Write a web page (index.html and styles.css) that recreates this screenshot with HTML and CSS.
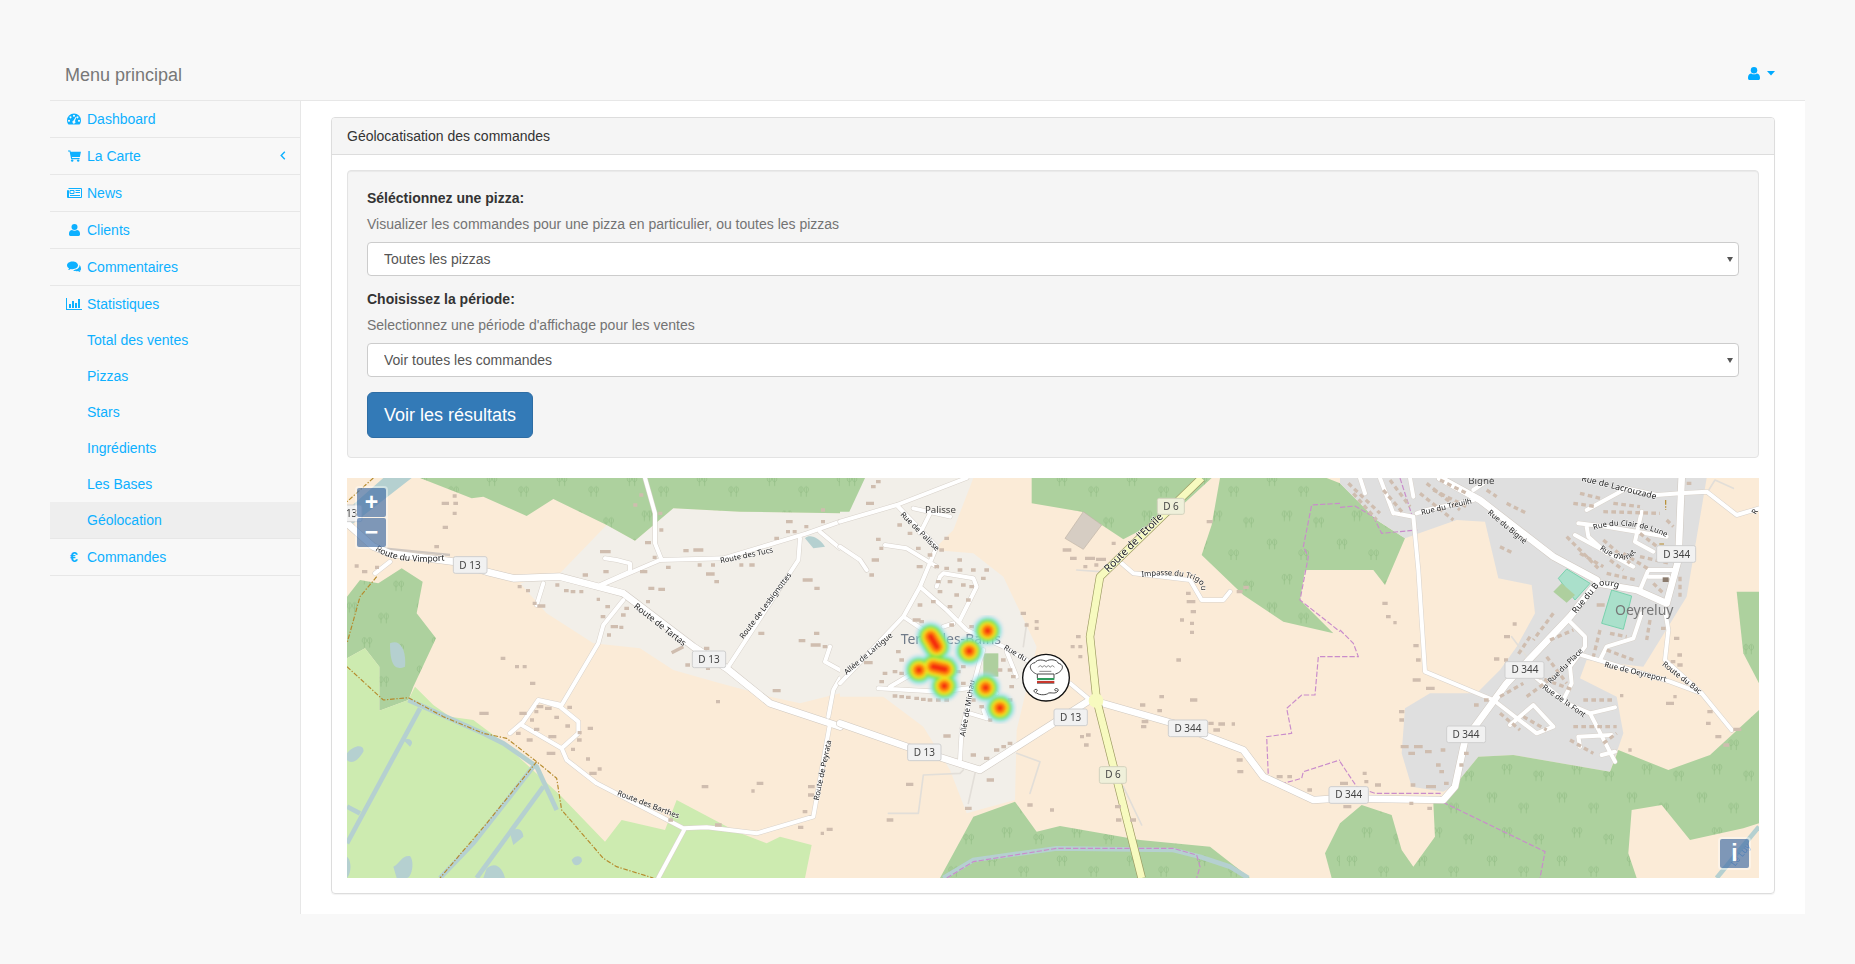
FILE: index.html
```html
<!DOCTYPE html>
<html lang="fr">
<head>
    <meta charset="UTF-8">
    <meta name="viewport" content="width=device-width, initial-scale=1.0">
    <title>Géolocalisation des commandes</title>
    <link rel="stylesheet" href="styles.css">
</head>
<body>
<nav class="topbar">
    <span class="brand">Menu principal</span>
    <a class="user-menu" href="#">
        <svg class="ico" width="12" height="13" viewBox="0 0 11 12"><circle cx="5.5" cy="3" r="3"/><path d="M0 10.6V9.5C0 7.5 1.5 6 3 6c.7.5 1.5.8 2.5.8S7.3 6.5 8 6c1.5 0 3 1.5 3 3.5v1.1c0 .8-.6 1.4-1.4 1.4H1.4C.6 12 0 11.4 0 10.6z"/></svg>
        <svg class="ico caret" width="8" height="5" viewBox="0 0 8 5"><path d="M0 0h8L4 4.6z"/></svg>
    </a>
</nav>

<div class="layout">
    <aside class="sidebar">
        <ul class="side-menu">
            <li><a href="#"><span class="icon-box"><svg class="ico" width="14" height="12" viewBox="0 0 14 12"><path fill-rule="evenodd" d="M7 .5A7 7 0 0 0 0 7.5c0 1.3.35 2.5 1 3.5.15.25.4.5.7.5h10.6c.3 0 .55-.25.7-.5.65-1 1-2.2 1-3.5A7 7 0 0 0 7 .5zM7 1.7a1 1 0 1 0 .01 0zM3.5 3.2a1 1 0 1 0 .01 0zM10.5 3.2a1 1 0 1 0 .01 0zM2 6.7a1 1 0 1 0 .01 0zM12 6.7a1 1 0 1 0 .01 0zM8.6 3.9L6.6 7.6a1.5 1.5 0 1 0 1.3.3l1.5-3.7z"/></svg></span>Dashboard</a></li>
            <li><a href="#"><span class="icon-box"><svg class="ico" width="13" height="12" viewBox="0 0 14 13"><path d="M0 .5h2.5l.4 1.5H14l-1.2 5.5H4.2l.3 1.2h8v1.2H3.4L1.7 1.7H0z"/><circle cx="4.5" cy="11.5" r="1.3"/><circle cx="11" cy="11.5" r="1.3"/></svg></span>La Carte<svg class="chevron" width="6" height="9" viewBox="0 0 6 9"><path d="M4.8.8L1.2 4.5l3.6 3.7"/></svg></a></li>
            <li><a href="#"><span class="icon-box"><svg class="ico line" width="16" height="12" viewBox="0 0 16 12"><path d="M2.5 1.5h13v9h-14v-7h1v6.5M4 3.5h4v3H4zM9.5 3.5h4.5M9.5 5.5h4.5M4 8.5h10"/></svg></span>News</a></li>
            <li><a href="#"><span class="icon-box"><svg class="ico" width="11" height="12" viewBox="0 0 11 12"><circle cx="5.5" cy="3" r="3"/><path d="M0 10.6V9.5C0 7.5 1.5 6 3 6c.7.5 1.5.8 2.5.8S7.3 6.5 8 6c1.5 0 3 1.5 3 3.5v1.1c0 .8-.6 1.4-1.4 1.4H1.4C.6 12 0 11.4 0 10.6z"/></svg></span>Clients</a></li>
            <li><a href="#"><span class="icon-box"><svg class="ico" width="14" height="12" viewBox="0 0 14 12"><path d="M5.5.5C2.5.5 0 2.2 0 4.3c0 1.2.8 2.3 2 3-.1.6-.5 1.2-1 1.7 1 0 2-.4 2.8-1 .5.1 1.1.2 1.7.2 3 0 5.5-1.7 5.5-3.9S8.5.5 5.5.5z"/><path d="M12.3 3.8c.1.2.2.5.2.8 0 2.6-2.8 4.4-6.5 4.5.9.8 2.2 1.2 3.6 1.2.5 0 1 0 1.4-.2.7.5 1.5.9 2.4.9-.4-.4-.7-.9-.8-1.4C13.4 10 14 9 14 8c0-1.8-.7-3.2-1.7-4.2z"/></svg></span>Commentaires</a></li>
            <li class="has-sub">
                <a href="#"><span class="icon-box"><svg class="ico" width="16" height="12" viewBox="0 0 16 12"><path d="M0 0h1v11h15v1H0z"/><path d="M3 6h2v4H3zM6 3h2v7H6zM9 5h2v5H9zM12 1h2v9h-2z"/></svg></span>Statistiques</a>
                <ul class="sub-menu">
                    <li><a href="#">Total des ventes</a></li>
                    <li><a href="#">Pizzas</a></li>
                    <li><a href="#">Stars</a></li>
                    <li><a href="#">Ingrédients</a></li>
                    <li><a href="#">Les Bases</a></li>
                    <li class="active"><a href="#">Géolocation</a></li>
                </ul>
            </li>
            <li><a href="#"><span class="icon-box euro">€</span>Commandes</a></li>
        </ul>
    </aside>

    <main class="page">
        <section class="panel">
            <div class="panel-heading">Géolocatisation des commandes</div>
            <div class="panel-body">
                <form class="well">
                    <label for="pizza">Séléctionnez une pizza:</label>
                    <p class="help">Visualizer les commandes pour une pizza en particulier, ou toutes les pizzas</p>
                    <div class="select-wrap">
                        <select id="pizza" class="form-control">
                            <option>Toutes les pizzas</option>
                        </select>
                    </div>
                    <label for="periode">Choisissez la période:</label>
                    <p class="help">Selectionnez une période d'affichage pour les ventes</p>
                    <div class="select-wrap">
                        <select id="periode" class="form-control">
                            <option>Voir toutes les commandes</option>
                        </select>
                    </div>
                    <button type="button" class="btn">Voir les résultats</button>
                </form>

                <div class="map">
                    <svg class="map-canvas" width="1412" height="400" viewBox="0 0 4236 1200">
                        <defs>
                            <pattern id="trees" width="210" height="190" patternUnits="userSpaceOnUse">
                                <rect width="210" height="190" fill="#add19e"/>
                                <g fill="none" stroke="#93bd85" stroke-width="2.2">
                                    <path id="tree" d="M28 48V20M44 48V20M28 18c-8 0-9 17 0 17s8-17 0-17zM44 18c-8 0-9 17 0 17s8-17 0-17z"/>
                                    <use href="#tree" x="95" y="32"/>
                                    <use href="#tree" x="45" y="105"/>
                                    <use href="#tree" x="140" y="125"/>
                                </g>
                            </pattern>
                            <path id="p-vimport" d="M105 240Q170 288 330 270"/>
                            <path id="p-impasse" d="M905 320Q1000 310 1050 325T1075 375"/>
                            <path id="p-clair" d="M762 180Q860 145 988 205"/>
                            <path id="p-arriet" d="M778 238Q840 280 868 265T892 218"/>
                            <path id="p-bourg" d="M708 432L775 350Q800 340 845 358"/>
                            <path id="heat" d="M443 482h0M388 543h0M272 500L290 530M237 600h0M280 590L315 598M313 648h0M437 653h0M480 714h0"/>
                            <filter id="soft" x="-20%" y="-20%" width="140%" height="140%"><feGaussianBlur stdDeviation="4"/></filter>
                        </defs>

                        <rect width="4236" height="1200" fill="#fbebd7"/>

                        <!-- left part of the map -->
                        <g transform="translate(-21,-24)">
                            <path class="town" d="M540 340L660 310 800 165 885 212 1000 115 1200 125 1500 130V670L1380 700 1290 680 1140 640 1000 600 900 535 760 520 620 430z"/>
                            <path class="wood" d="M240 24L395 85 430 80 560 138 640 87 800 165 885 212 1000 115 1200 125 1500 130V24z"/>
                            <path class="wood" d="M21 380L60 330 115 340 185 295 248 335 230 430 288 505 220 650 205 690 118 722V590L75 535 21 565z"/>
                            <path class="meadow" d="M21 565L75 535 118 590V722L205 690 225 650 280 705 330 740 400 750 480 810 660 975 795 1115 845 1050 975 1080 1010 990 1190 1085 1280 1120 1320 1100 1415 1125 1395 1224H21z"/>
                            <path class="water-line" d="M205 690L430 790 490 820 590 890 650 1020M240 715L21 1120M580 890L400 1120 300 1224M610 950L410 1224M21 1010L60 1030"/>
                            <path class="water" d="M130 24H215L21 175V120zM150 520C180 505 200 540 195 590 170 600 150 595 150 520zM21 850C45 820 75 825 70 845 50 880 30 880 21 870zM190 810C210 800 225 815 210 830zM695 1170C710 1150 730 1160 725 1175 715 1190 700 1190 695 1170zM160 1190C180 1180 185 1155 210 1158 225 1175 215 1224 200 1224H170zM510 1090C530 1065 550 1080 550 1100L520 1125zM440 1195C470 1170 490 1200 495 1224H430zM1395 205C1410 190 1440 205 1455 230L1420 235zM21 1160C35 1170 35 1210 21 1224z"/>
                            <path class="casing" d="M100 232L330 255M100 232L150 250 340 276"/>
                            <path class="road-case" d="M915 24L945 130V220L965 270M785 345L960 270 1150 265 1400 190 1500 155M780 345L870 305V280L830 270 795 265M610 340L590 405M850 390L790 465 775 520 665 705 595 690 550 755 510 790M595 690L660 710 715 755V790L665 835 545 765M665 835L680 870 770 940 1030 1075 1100 1072 1250 1090 1420 1040 1470 760M1035 1075L955 1224M1380 205L1375 270 1165 590M1470 530L1455 575 1500 600M1500 625L1480 660 1465 740M1440 185L1500 235M150 275L105 310"/>
                            <path class="major-case" d="M21 160L100 230 150 250 340 275 440 305 520 325 660 320 850 370 1060 530 1160 595 1290 700 1500 770"/>
                            <path class="road" d="M915 24L945 130V220L965 270M785 345L960 270 1150 265 1400 190 1500 155M780 345L870 305V280L830 270 795 265M610 340L590 405M850 390L790 465 775 520 665 705 595 690 550 755 510 790M595 690L660 710 715 755V790L665 835 545 765M665 835L680 870 770 940 1030 1075 1100 1072 1250 1090 1420 1040 1470 760M1035 1075L955 1224M1380 205L1375 270 1165 590M1470 530L1455 575 1500 600M1500 625L1480 660 1465 740M1440 185L1500 235M150 275L105 310"/>
                            <path class="major" d="M21 160L100 230 150 250 340 275 440 305 520 325 660 320 850 370 1060 530 1160 595 1290 700 1500 770"/>
                            <path class="border-brown" d="M21 590L130 690 205 683 310 740 430 790 500 805 590 875 650 925 665 1020 790 1165 830 1190 940 1224M590 875L440 1060 300 1224M100 24L21 95M110 320L60 380 21 520"/>
                            <path class="bldg" d="M482 565h14M525 590h12M548 590h12M570 640h16M418 730h28M340 100h14M305 100h22M338 130h12M308 172h16M283 230h14M44 288h12M66 305h16M105 292h12M338 78h12M780 245h32M790 305h16M898 75h12M880 105h12M955 130h12M958 180h12M915 218h18M938 262h12M1030 242h16M1060 240h30M978 292h14M900 305h22M1073 285h12M1113 285h12M1198 285h12M1228 285h16M1303 205h14M1338 155h20M1338 185h12M1358 185h12M1393 170h12M1443 120h12M1443 155h12M1098 312h26M1123 335h14M1388 330h30M1423 355h16M1376 512h20M1412 525h30M1422 490h16M1448 530h14M1255 490h18M1092 535h16M1128 695h12M1298 662h24M925 355h18M955 358h20M918 395h12M853 415h14M843 435h14M796 410h14M770 388h10M782 440h14M812 470h22M838 472h12M801 495h12M728 315h16M646 345h12M692 365h14M718 365h12M672 362h14M533 350h12M558 362h12M592 408h24M578 400h12M995 548L1030 530M1036 585h14M1098 595h12M590 710h20M615 715h20M682 712h14M643 742h14M676 768h14M583 725h12M538 730h22M570 750h12M582 778h16M625 800h24M743 775h16M713 788h12M711 810h14M693 838h12M738 867h12M773 897h12M748 910h22M620 850h26M560 810h18M528 790h14M1085 950h20M1250 940h20M1234 963h10M1388 1025h14M1374 1072h16M1404 950h20M1404 975h18M1460 1078h18M1442 1090h10M1125 1065h20M985 1050h14"/>
                            <text class="lbl wide"><textPath href="#p-vimport">Route du Vimport</textPath></text>
                            <text class="lbl" transform="translate(1142,280) rotate(-12)">Route des Tucs</text>
                            <text class="lbl" transform="translate(1210,508) rotate(-53)">Route de Lesbignottes</text>
                            <text class="lbl wide" transform="translate(880,412) rotate(38)">Route de Tartas</text>
                            <text class="lbl" transform="translate(830,975) rotate(21)">Route des Barthes</text>
                            <text class="lbl" transform="translate(1436,992) rotate(-78)">Route de Peyrata</text>
                            <g class="shield"><rect x="-40" y="105" width="106" height="50" rx="6"/><text x="20" y="140">D 13</text></g>
                            <g class="shield"><rect x="340" y="260" width="101" height="50" rx="6"/><text x="390" y="296">D 13</text></g>
                            <g class="shield"><rect x="1057" y="543" width="100" height="50" rx="6"/><text x="1107" y="579">D 13</text></g>
                        </g>

                        <!-- middle part of the map -->
                        <g transform="translate(1479,-24)">
                            <path class="town" d="M0 125L75 24H400L340 180 280 240 400 250 490 320 590 530 530 780 525 990 380 1030 330 900 250 770 130 680H0z"/>
                            <path class="wood" d="M0 24H75L28 125H0z"/>
                            <path class="wood" d="M575 24V100L725 125 850 208 1000 130 1115 24z"/>
                            <path class="wood" d="M1140 24L1115 165 1085 255 1210 375 1330 455 1480 490 1380 390 1395 300H1600L1635 345 1695 205 1610 150 1550 90 1500 40 1460 24z"/>
                            <path class="wood" d="M300 1224L400 1040 525 995 590 1085 660 1068 900 1110 1110 1130 1230 1224z"/>
                            <path class="wood" d="M1500 1060L1455 1150 1475 1224H1500z"/>
                            <path class="hall" d="M675 205L730 125 785 165 730 238z"/>
                            <path class="park" d="M430 550H475V620H430z"/>
                            <path class="river" d="M310 1224L400 1170 650 1135 1000 1140 1080 1160 1170 1190 1225 1224"/>
                            <path class="border-pink" d="M320 1224L400 1175 650 1135 1000 1135 1070 1155 1080 1190 1070 1224M1500 560H1435L1425 675H1385L1340 715 1355 790 1280 800 1285 920 1330 940 1385 925 1390 905 1500 870M1500 100L1415 105 1390 230 1405 260 1380 390 1500 485"/>
                            <path class="thin" d="M145 1030H235L250 915 360 910 370 900M530 850L600 875 570 970M560 460L550 530M850 950L905 1065M385 1000L405 910M710 300L780 305"/>
                            <path class="road-case" d="M0 155L170 105 380 24M170 105L290 230 240 350 190 440 0 640M220 115L330 140M270 130L240 190M135 225L200 235 290 290M0 230L60 270 80 300M240 350L320 420 380 480 490 530 560 570M690 640L750 690M300 320L310 310 400 325 410 350 360 450M300 320L290 350M190 440L250 480M310 470L340 460M115 655L300 665 420 650M150 650L210 615M360 870L365 780 420 570 430 540M390 730L440 745 430 720M470 670L440 650M500 545L510 570 530 620M845 280L880 310 1050 330 1085 390H1150L1170 365"/>
                            <path class="major-case" d="M0 760L200 830 420 900 640 760 750 690M790 700L1000 760 1210 840 1270 920 1420 990 1500 985"/>
                            <path class="road" d="M0 155L170 105 380 24M170 105L290 230 240 350 190 440 0 640M220 115L330 140M270 130L240 190M135 225L200 235 290 290M0 230L60 270 80 300M240 350L320 420 380 480 490 530 560 570M690 640L750 690M300 320L310 310 400 325 410 350 360 450M300 320L290 350M190 440L250 480M310 470L340 460M115 655L300 665 420 650M150 650L210 615M360 870L365 780 420 570 430 540M390 730L440 745 430 720M470 670L440 650M500 545L510 570 530 620M845 280L880 310 1050 330 1085 390H1150L1170 365"/>
                            <path class="major" d="M0 760L200 830 420 900 640 760 750 690M790 700L1000 760 1210 840 1270 920 1420 990 1500 985"/>
                            <path class="trunk-case" d="M1085 24L780 320 750 500 770 690 905 1224"/>
                            <path class="trunk" d="M1085 24L780 320 750 500 770 690 905 1224"/>
                            <circle cx="768" cy="692" r="22" fill="#f7fabf"/>
                            <path class="bldg" d="M108 35h14M93 50h14M78 100h24M172 165h14M203 190h14M108 208h14M118 235h12M95 270h22M230 290h18M88 315h14M228 235h14M263 255h14M298 240h14M313 205h14M352 270h14M283 290h14M313 295h14M353 300h14M393 300h14M423 325h14M433 300h14M288 335h14M323 335h14M363 345h14M388 350h14M293 365h14M343 375h14M273 395h14M323 410h14M378 390h14M233 405h14M218 450h24M238 455h14M328 465h14M388 470h14M542 430h16M584 455h12M584 475h12M554 465h12M168 545h14M178 570h14M72 578h26M118 635h14M128 610h14M158 605h14M178 610h14M158 678h14M178 680h14M198 682h14M223 685h14M243 688h14M263 690h14M288 690h14M313 690h14M363 640h14M348 605h14M363 590h14M483 570h14M473 600h14M503 600h14M513 620h14M508 650h14M503 690h14M418 710h14M393 690h14M445 750h12M310 798h22M392 855h16M432 865h16M462 840h16M484 830h14M503 820h14M440 930h22M375 1015h20M198 943h22M140 1050h20M562 1005h16M630 1020h12M708 500h14M715 530h12M715 560h12M692 530h12M735 265h30M768 268h30M730 290h12M763 285h12M690 265h20M668 240h26M815 220h12M1100 155h18M1038 370h14M1040 395h26M1052 425h16M1020 450h12M1050 460h12M1050 487h12M1009 570h14M1190 365h18M1210 352h16M958 680h14M1050 690h22M900 705h16M952 722h14M1105 760h16M1135 762h20M1120 780h20M1175 762h10M905 755h20M903 770h16M720 800h12M738 795h14M732 825h14M1190 870h18M1192 905h18M1310 920h18M1342 920h14M1402 960h14M825 1010h18M828 1050h16M870 1050h18"/>
                            <text class="place" x="182" y="522">Tercis-les-Bains</text>
                            <text class="town-lbl" x="255" y="128">Palisse</text>
                            <text class="lbl" transform="translate(180,135) rotate(45)">Rue de Palisse</text>
                            <text class="lbl" transform="translate(20,615) rotate(-40)">Allée de Lartigue</text>
                            <text class="lbl" transform="translate(375,800) rotate(-80)">Allée de Michau</text>
                            <text class="lbl" transform="translate(490,537) rotate(30)">Rue du</text>
                            <text class="lbl big" transform="translate(805,308) rotate(-45)">Route de l'Etoile</text>
                            <text class="lbl"><textPath href="#p-impasse">Impasse du Trigou</textPath></text>

                            <!-- heatmap of the orders -->
                            <g class="heat" filter="url(#soft)">
                                <use href="#heat" stroke="#a8d8f0" stroke-width="94" opacity=".4"/>
                                <use href="#heat" stroke="#6fe8d8" stroke-width="80" opacity=".7"/>
                                <use href="#heat" stroke="#7fe24a" stroke-width="68"/>
                                <use href="#heat" stroke="#f2e61c" stroke-width="52"/>
                                <use href="#heat" stroke="#ff8c10" stroke-width="38"/>
                                <use href="#heat" stroke="#f52a10" stroke-width="19"/>
                            </g>

                            <g class="shield"><rect x="642" y="717" width="100" height="50" rx="6"/><text x="692" y="753">D 13</text></g>
                            <g class="shield"><rect x="203" y="822" width="100" height="50" rx="6"/><text x="253" y="858">D 13</text></g>
                            <g class="shield"><rect x="985" y="750" width="118" height="50" rx="6"/><text x="1044" y="786">D 344</text></g>
                            <g class="shield d6"><rect x="952" y="85" width="81" height="48" rx="6"/><text x="993" y="120">D 6</text></g>
                            <g class="shield d6"><rect x="778" y="890" width="81" height="50" rx="6"/><text x="819" y="925">D 6</text></g>

                            <!-- restaurant logo -->
                            <circle cx="618" cy="623" r="70" fill="#fff" stroke="#111" stroke-width="4"/>
                            <path class="chef" d="M590 612C570 605 562 582 585 578 592 566 612 570 618 574 628 566 652 568 655 580 676 584 668 606 646 612M592 612H642M592 612V625M642 612V625"/>
                            <path class="chef light" d="M595 592q6-10 12 0q6-10 12 0q6-10 12 0q6-10 12 0M598 604h36"/>
                            <path d="M591 624H643V630H591z" fill="#2f9a5c"/>
                            <path d="M591 630H643V633H591z" fill="#eee"/>
                            <path d="M591 633H643V639H591z" fill="#c8372d"/>
                            <path d="M591 639H643V641H591z" fill="#555"/>
                            <path class="chef" d="M590 669c-9 0-11-11-2-11 6 0 5 7 0 6M590 669c10 8 30 6 36 0 10-2 20 4 28-6 3-8-8-10-10-4 0 4 5 4 6 1"/>
                        </g>

                        <!-- right part of the map -->
                        <g transform="translate(2979,-24)">
                            <path class="town2" d="M195 205L350 150 435 155 475 325 575 345 585 430 530 530 480 600 410 670H270L195 715 185 850 215 950 310 965 350 940 415 860 520 855 810 905 850 790 830 680 720 625 740 570 910 590 1040 380 1100 24H0V40L50 90 110 150z"/>
                            <path class="wood" d="M1190 365H1257V640L1210 550z"/>
                            <path class="wood" d="M350 940L415 860 520 855 810 905 835 840 985 900 1110 855 1257 720V1060L1210 1075 1050 1110 965 1005 875 1020 865 1150 890 1224H0V1060L65 1005 155 1035 185 1140 220 1190 285 1100 280 1000 310 990z"/>
                            <path class="river" d="M1130 1224L1257 1070"/>
                            <path class="pitch" d="M680 297L750 340 705 390 655 325z"/>
                            <path class="pitch" d="M785 460L815 360 875 378 850 478z"/>
                            <path class="park" d="M640 365L665 340 705 375 680 398z"/>
                            <path class="border-pink" d="M0 112L45 108 100 140 125 190 230 180 180 24M0 480L40 520 55 560H0M0 875L50 950 105 970H300L305 995 615 1145 600 1224"/>
                            <path class="border-brown" d="M977 90V120M958 222H975"/>
                            <path class="thin" d="M1100 70L1125 30 1180 55M515 500L560 560"/>
                            <path class="road-case" d="M230 130L260 120 400 90M220 140L235 300 255 605 460 690 590 790 640 770 580 705 510 765M160 130L120 24M220 140L165 130M220 80L210 24M60 24L75 70M400 60L430 40M690 455L735 500V530L690 590 695 640 670 690M590 625L680 700 750 730 825 712M750 730L825 875M715 800L815 795M715 800L720 830M785 855L825 845M725 555L990 635 1085 670 1175 780M780 570L800 530 880 505 905 430M975 420L985 480 975 570 1085 670M715 160L800 170 980 200M705 195L880 290M740 170L745 200 800 250M905 125L885 215 940 245M740 120L860 55 950 75 1020 70 1100 65 1190 135 1257 115M900 360L925 300H1000M925 320H985"/>
                            <path class="major-case" d="M0 985L310 990 345 950 375 810 500 640 690 440 770 340M770 340L890 360 980 400 1015 270 1025 24M300 24L420 90 640 260 770 330"/>
                            <path class="road" d="M230 130L260 120 400 90M220 140L235 300 255 605 460 690 590 790 640 770 580 705 510 765M160 130L120 24M220 140L165 130M220 80L210 24M60 24L75 70M400 60L430 40M690 455L735 500V530L690 590 695 640 670 690M590 625L680 700 750 730 825 712M750 730L825 875M715 800L815 795M715 800L720 830M785 855L825 845M725 555L990 635 1085 670 1175 780M780 570L800 530 880 505 905 430M975 420L985 480 975 570 1085 670M715 160L800 170 980 200M705 195L880 290M740 170L745 200 800 250M905 125L885 215 940 245M740 120L860 55 950 75 1020 70 1100 65 1190 135 1257 115M900 360L925 300H1000M925 320H985"/>
                            <path class="major" d="M0 985L310 990 345 950 375 810 500 640 690 440 770 340M770 340L890 360 980 400 1015 270 1025 24M300 24L420 90 640 260 770 330"/>
                            <path class="bldg-row" d="M25 40L120 130M130 60L190 130M240 70L340 150M280 60L380 110M440 60L470 80M500 100L560 130M480 230L520 250M720 70L780 85M790 125L960 130M680 200L780 300M790 210L870 280M800 310L890 330M900 190L990 260M850 250L930 300M1040 40H1060M1020 320V380M940 340L970 370M930 450L920 510M780 480L760 560M810 490L860 500M800 540L880 570M570 500L530 560M640 430L580 510M630 510L700 480M620 560L680 640M590 620L700 660M480 680L550 640M480 730L540 780M560 680L640 620M550 740L620 780M700 770H830M690 810L760 850M730 690H820M790 820L830 790M700 100L770 110M820 100L900 110M980 150L1000 170M900 260L990 280M810 270L850 300M720 250L790 290M40 70L110 150M150 30L210 110M260 40L360 120M300 30L380 70"/>
                            <path class="bldg" d="M127 400h16M138 440h14M160 458h10M518 462h12M492 500h18M462 567h16M492 570h12M220 527h16M228 570h14M218 630h24M258 655h26M177 725h16M178 750h14M182 830h24M222 830h26M205 850h20M255 845h20M302 840h14M288 885h14M298 905h14M312 940h14M212 945h14M258 950h30M372 850h14M358 885h12M402 705h14M432 690h14M978 700h24M1000 680h10M840 677h10M1102 725h16M1098 760h14M1126 800h18M1150 825h18M1180 778h24M865 840h10M1002 505h16M1012 555h14M1012 585h16M992 575h14M963 475h14M770 405h24M68 910h12M73 935h12M105 945h18M10 1010h24M208 1000h12M262 1015h14M0 940h24"/>
                            <path class="hall-dark" d="M968 322h18v14h-18z"/>
                            <text class="town-lbl" x="385" y="42">Bigné</text>
                            <text class="place gray" x="825" y="435">Oeyreluy</text>
                            <text class="lbl" transform="translate(245,135) rotate(-13)">Rue du Treuilh</text>
                            <text class="lbl" transform="translate(442,130) rotate(40)">Rue du Bigné</text>
                            <text class="lbl wide" text-anchor="end" transform="translate(947,88) rotate(14)">Rue de Lacrouzade</text>
                            <text class="lbl"><textPath href="#p-clair">Rue du Clair de Lune</textPath></text>
                            <text class="lbl"><textPath href="#p-arriet">Rue d'Arriet</textPath></text>
                            <text class="lbl wide"><textPath href="#p-bourg">Rue du Bourg</textPath></text>
                            <text class="lbl" transform="translate(632,642) rotate(-45)">Rue du Place</text>
                            <text class="lbl" transform="translate(605,655) rotate(35)">Rue de la Font</text>
                            <text class="lbl" transform="translate(792,590) rotate(14)">Rue de Oeyreport</text>
                            <text class="lbl" transform="translate(965,585) rotate(38)">Route du Bac</text>
                            <text class="lbl" transform="translate(1247,135) rotate(-60)">R</text>
                            <text class="river-lbl" transform="translate(1185,1190) rotate(-52)">Le Luy</text>
                            <g class="shield"><rect x="950" y="227" width="117" height="50" rx="6"/><text x="1010" y="263">D 344</text></g>
                            <g class="shield"><rect x="495" y="575" width="117" height="50" rx="6"/><text x="555" y="610">D 344</text></g>
                            <g class="shield"><rect x="320" y="768" width="117" height="50" rx="6"/><text x="378" y="803">D 344</text></g>
                            <g class="shield"><rect x="-33" y="950" width="118" height="50" rx="6"/><text x="26" y="985">D 344</text></g>
                        </g>
                    </svg>

                    <div class="zoom-box">
                        <button type="button" class="map-btn">+</button>
                        <button type="button" class="map-btn">−</button>
                    </div>
                    <div class="info-box"><button type="button" class="map-btn">i</button></div>
                </div>
            </div>
        </section>
    </main>
</div>
</body>
</html>
```

FILE: styles.css
```css
* {
    box-sizing: border-box;
}
body {
    margin: 0;
    padding: 50px;
    min-height: 964px;
    background-color: #f8f8f8;
    font-family: "Liberation Sans", Arial, sans-serif;
    font-size: 14px;
    line-height: 20px;
    color: #333;
}
a {
    color: #0db0ff;
    text-decoration: none;
}

/* top bar */
.topbar {
    display: flex;
    align-items: center;
    justify-content: space-between;
    height: 51px;
    padding: 0 30px 1px 15px;
    border-bottom: 1px solid #e7e7e7;
}
.brand {
    font-size: 18px;
    color: #777;
}
.user-menu {
    display: flex;
    align-items: center;
    gap: 7px;
    margin-bottom: 2px;
    color: #00aaff;
}
.ico {
    display: block;
    fill: currentColor;
}
.ico.line {
    fill: none;
    stroke: currentColor;
    stroke-width: 1;
}

/* sidebar */
.layout {
    display: flex;
    height: 813px;
}
.sidebar {
    flex: 0 0 251px;
    border-right: 1px solid #e7e7e7;
}
.side-menu, .sub-menu {
    list-style: none;
    margin: 0;
    padding: 0;
}
.side-menu > li {
    border-bottom: 1px solid #e7e7e7;
}
.side-menu a {
    display: flex;
    align-items: center;
    height: 36px;
    padding: 0 15px;
}
.icon-box {
    display: flex;
    justify-content: center;
    flex: 0 0 18px;
    margin-right: 4px;
}
.euro {
    font-weight: bold;
}
.chevron {
    margin-left: auto;
    margin-right: -1px;
    margin-top: -2px;
    fill: none;
    stroke: currentColor;
    stroke-width: 1.4;
}
.sub-menu a {
    padding-left: 37px;
}
.sub-menu .active {
    background-color: #eee;
}

/* main content */
.page {
    flex: 1;
    padding: 16px 30px 20px;
    background-color: #fff;
}
.panel {
    height: 777px;
    border: 1px solid #ddd;
    border-radius: 4px;
    box-shadow: 0 1px 1px rgba(0, 0, 0, .05);
}
.panel-heading {
    height: 37px;
    padding: 8px 15px;
    background-color: #f5f5f5;
    border-bottom: 1px solid #ddd;
    border-radius: 3px 3px 0 0;
}
.panel-body {
    padding: 15px;
}
.well {
    height: 288px;
    margin-bottom: 20px;
    padding: 17px 19px 19px;
    background-color: #f5f5f5;
    border: 1px solid #e3e3e3;
    border-radius: 4px;
    box-shadow: inset 0 1px 1px rgba(0, 0, 0, .05);
}
.well label {
    display: block;
    font-weight: bold;
}
.help {
    margin: 6px 0 8px;
    color: #737373;
}
.select-wrap {
    position: relative;
    margin-bottom: 13px;
}
.select-wrap::after {
    content: "";
    position: absolute;
    top: 15px;
    right: 6px;
    border-style: solid;
    border-width: 5px 3.5px 0;
    border-color: #555 transparent transparent;
    pointer-events: none;
}
.form-control {
    display: block;
    width: 100%;
    height: 34px;
    padding: 6px 12px 6px 16px;
    font-family: inherit;
    font-size: 14px;
    color: #555;
    background-color: #fff;
    border: 1px solid #ccc;
    border-radius: 4px;
    appearance: none;
}
.btn {
    display: block;
    margin-top: 15px;
    padding: 10px 16px;
    height: 46px;
    font-family: inherit;
    font-size: 18px;
    line-height: 24px;
    color: #fff;
    background-color: #337ab7;
    border: 1px solid #2e6da4;
    border-radius: 6px;
}

/* map */
.map {
    position: relative;
    height: 400px;
    overflow: hidden;
}
.map-canvas {
    display: block;
    filter: blur(.35px);
}
.town { fill: #f2efe9; }
.town2 { fill: #dfdfdf; }
.wood { fill: url(#trees); }
.meadow { fill: #cdebb0; }
.water { fill: #b5d0d0; }
.park { fill: #aecf9e; }
.pitch { fill: #aae0cb; stroke: #7ad2ae; stroke-width: 3; }
.hall { fill: #d6cdc3; stroke: #c0b3a6; stroke-width: 2; }
.hall-dark { fill: #8a7a6c; }
.water-line, .river {
    fill: none;
    stroke: #b5d0d0;
    stroke-width: 14;
}
.casing { fill: none; stroke: #cfc7c0; stroke-width: 7; }
.road-case, .road, .major-case, .major, .trunk-case, .trunk, .thin {
    fill: none;
    stroke-linejoin: round;
    stroke-linecap: round;
}
.road-case { stroke: #d8d2cb; stroke-width: 15; }
.road { stroke: #fff; stroke-width: 12; }
.major-case { stroke: #cfc8c0; stroke-width: 23; }
.major { stroke: #fff; stroke-width: 20; }
.trunk-case { stroke: #9c9a62; stroke-width: 25; stroke-linecap: butt; }
.trunk { stroke: #f7fabf; stroke-width: 21; stroke-linecap: butt; }
.thin { stroke: #e2ded8; stroke-width: 5; }
.border-brown {
    fill: none;
    stroke: #b58a2c;
    stroke-width: 3.5;
    stroke-dasharray: 14 5 4 5;
}
.border-pink {
    fill: none;
    stroke: #c98ccb;
    stroke-width: 3.5;
    stroke-dasharray: 16 6;
}
.bldg {
    fill: none;
    stroke: #cfbdaf;
    stroke-width: 10;
}
.bldg-row {
    fill: none;
    stroke: #cfbdaf;
    stroke-width: 10;
    stroke-dasharray: 14 10;
}
.heat use {
    fill: none;
    stroke-linecap: round;
}
.lbl {
    font-family: "Noto Sans", sans-serif;
    font-size: 23px;
    fill: #222;
    stroke: #fff;
    stroke-width: 3px;
    stroke-opacity: .8;
    paint-order: stroke;
}
.lbl.wide { font-size: 26px; }
.lbl.big { font-size: 31px; }
.town-lbl {
    font-family: "Noto Sans", sans-serif;
    font-size: 29px;
    fill: #444;
}
.place {
    font-family: "Noto Sans", sans-serif;
    font-size: 42px;
    fill: #6f7a88;
}
.place.gray { fill: #777; }
.river-lbl {
    font-family: "Noto Sans", sans-serif;
    font-size: 26px;
    fill: #6a9fd8;
}
.shield rect {
    fill: #f1f1f1;
    stroke: #cfcfcf;
    stroke-width: 3;
}
.shield text {
    font-family: "Noto Sans", sans-serif;
    font-size: 30px;
    fill: #444;
    text-anchor: middle;
}
.shield.d6 rect { fill: #eff0da; stroke: #d2d2bd; }
.chef {
    fill: none;
    stroke: #444;
    stroke-width: 3;
}
.chef.light { stroke: #888; }
.zoom-box, .info-box {
    position: absolute;
    padding: 2px;
    background-color: rgba(255, 255, 255, .4);
    border-radius: 4px;
}
.zoom-box {
    top: 8px;
    left: 8px;
}
.info-box {
    right: 8px;
    bottom: 8px;
}
.map-btn {
    display: block;
    width: 29px;
    height: 29px;
    padding: 0;
    font-family: "Liberation Sans", Arial, sans-serif;
    font-size: 23px;
    font-weight: bold;
    line-height: 29px;
    color: #fff;
    background-color: rgba(0, 60, 136, .5);
    border: 0;
    border-radius: 2px;
}
.zoom-box .map-btn + .map-btn {
    margin-top: 1px;
}
```
